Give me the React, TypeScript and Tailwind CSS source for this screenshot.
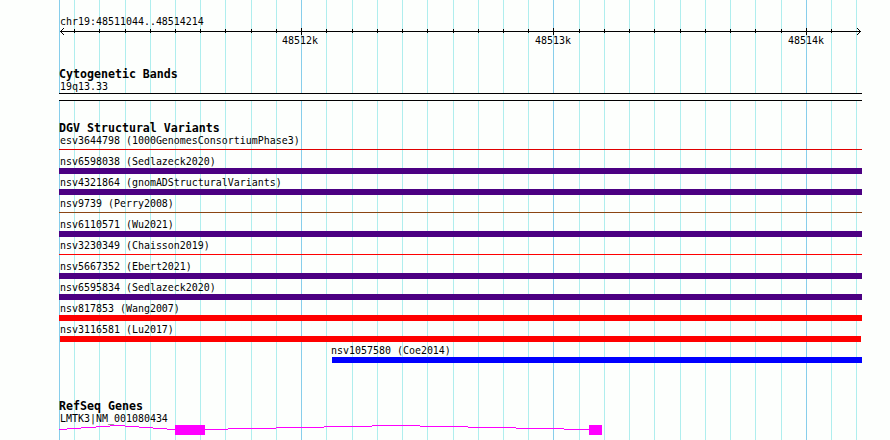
import React from 'react';

interface Variant {
  name: string;
  // classes for the feature bar under the label
  bar: string;
  offset?: string;
}

const variants: Variant[] = [
  { name: 'esv3644798 (1000GenomesConsortiumPhase3)', bar: 'mt-[3px] h-px bg-[#e00000]' },
  { name: 'nsv6598038 (Sedlazeck2020)', bar: 'mt-px h-1.5 bg-[#4b0082]' },
  { name: 'nsv4321864 (gnomADStructuralVariants)', bar: 'mt-px h-1.5 bg-[#4b0082]' },
  { name: 'nsv9739 (Perry2008)', bar: 'mt-[3px] h-px bg-[#8b4513]' },
  { name: 'nsv6110571 (Wu2021)', bar: 'mt-px h-1.5 bg-[#4b0082]' },
  { name: 'nsv3230349 (Chaisson2019)', bar: 'mt-[3px] h-px bg-[#ff0000]' },
  { name: 'nsv5667352 (Ebert2021)', bar: 'mt-px h-1.5 bg-[#4b0082]' },
  { name: 'nsv6595834 (Sedlazeck2020)', bar: 'mt-px h-1.5 bg-[#4b0082]' },
  { name: 'nsv817853 (Wang2007)', bar: 'mt-px h-1.5 bg-[#ff0000]' },
  { name: 'nsv3116581 (Lu2017)', bar: 'mt-px mx-px h-1.5 bg-[#ff0000]' },
  { name: 'nsv1057580 (Coe2014)', bar: 'mt-px ml-0.5 h-1.5 bg-[#0000ff]', offset: 'pl-[271px]' },
];

// 100bp steps, relative to the left edge of the panel
const minorTicks = [
  15, 40, 66, 91, 116, 141, 166, 192, 217, 267, 293, 318, 343, 368, 394, 419, 444, 469,
  520, 545, 570, 595, 621, 646, 671, 696, 722, 772, 797,
];
const majorTicks = [242, 494, 747];

// [start, end, y] of each intron step
const intron = [
  [0, 8, 4], [8, 22, 3], [22, 37, 2], [37, 51, 1], [51, 66, 0], [66, 80, 1], [80, 94, 2], [94, 108, 3], [108, 116, 4],
  [146, 169, 4], [169, 217, 3], [217, 265, 2], [265, 313, 1], [313, 361, 0], [361, 409, 1], [409, 457, 2], [457, 505, 3], [505, 530, 4],
];

const Label: React.FC<{ children: React.ReactNode }> = ({ children }) => (
  <div className="h-3 pl-px font-['DejaVu_Sans_Mono',monospace] text-[9.967px] leading-[14px] whitespace-pre text-black">
    {children}
  </div>
);

const Heading: React.FC<{ children: React.ReactNode }> = ({ children }) => (
  <h2 className="h-3 font-['DejaVu_Sans_Mono',monospace] text-[11.628px] leading-3 font-bold whitespace-pre text-black">
    {children}
  </h2>
);

const Grid = () => (
  <svg className="absolute inset-0 h-full w-full" shapeRendering="crispEdges">
    {minorTicks.map((x) => (
      <rect key={x} x={x} y={0} width={1} height={440} fill="#afeeee" />
    ))}
    {[0, ...majorTicks].map((x) => (
      <rect key={x} x={x} y={0} width={1} height={440} fill="#87ceeb" />
    ))}
  </svg>
);

const Ruler = () => (
  <div className="h-[19px]">
    <svg className="block h-[7px] w-[803px]" shapeRendering="crispEdges">
      <rect x={1} y={3} width={801} height={1} />
      {minorTicks.map((x) => (
        x < 797 && <rect key={x} x={x} y={1} width={1} height={4} />
      ))}
      {majorTicks.map((x) => (
        <rect key={x} x={x} y={0} width={1} height={7} />
      ))}
      {[1, 2, 3].map((d) => (
        <g key={d}>
          <rect x={d + 1} y={3 - d} width={1} height={1} />
          <rect x={d + 1} y={3 + d} width={1} height={1} />
          <rect x={801 - d} y={3 - d} width={1} height={1} />
          <rect x={801 - d} y={3 + d} width={1} height={1} />
        </g>
      ))}
    </svg>
    <div className="-mt-px flex gap-[216px] pl-[222px]">
      <Label>48512k</Label>
      <Label>48513k</Label>
      <Label>48514k</Label>
    </div>
  </div>
);

const Gene = () => (
  <svg className="block h-2.5 w-[803px]" shapeRendering="crispEdges" fill="#ff00ff">
    {intron.map(([start, end, y]) => (
      <rect key={start} x={start} y={y} width={end - start} height={1} />
    ))}
    <rect x={116} y={0} width={30} height={10} />
    <rect x={530} y={0} width={13} height={10} />
  </svg>
);

const App: React.FC = () => {
  return (
    <div className="h-[440px] w-[890px] overflow-hidden bg-[#fdfffd] pl-[59px]">
      <div className="relative h-full w-[803px]">
        <Grid />
        <div className="relative flex flex-col pt-[15px]">
          <Label>chr19:48511044..48514214</Label>
          <div className="mt-px">
            <Ruler />
          </div>

          <div className="mt-[21px]">
            <Heading>Cytogenetic Bands</Heading>
            <Label>19q13.33</Label>
            <div className="mt-px h-2 border-y border-black bg-[#fdfffd]" />
          </div>

          <div className="mt-[21px]">
            <Heading>DGV Structural Variants</Heading>
            {variants.map((variant) => (
              <div key={variant.name} className={`h-[21px] ${variant.offset || ''}`}>
                <Label>{variant.name}</Label>
                <div className={variant.bar} />
              </div>
            ))}
          </div>

          <div className="mt-[35px]">
            <Heading>RefSeq Genes</Heading>
            <Label>LMTK3|NM_001080434</Label>
            <div className="mt-px">
              <Gene />
            </div>
          </div>
        </div>
      </div>
    </div>
  );
};

export default App;
